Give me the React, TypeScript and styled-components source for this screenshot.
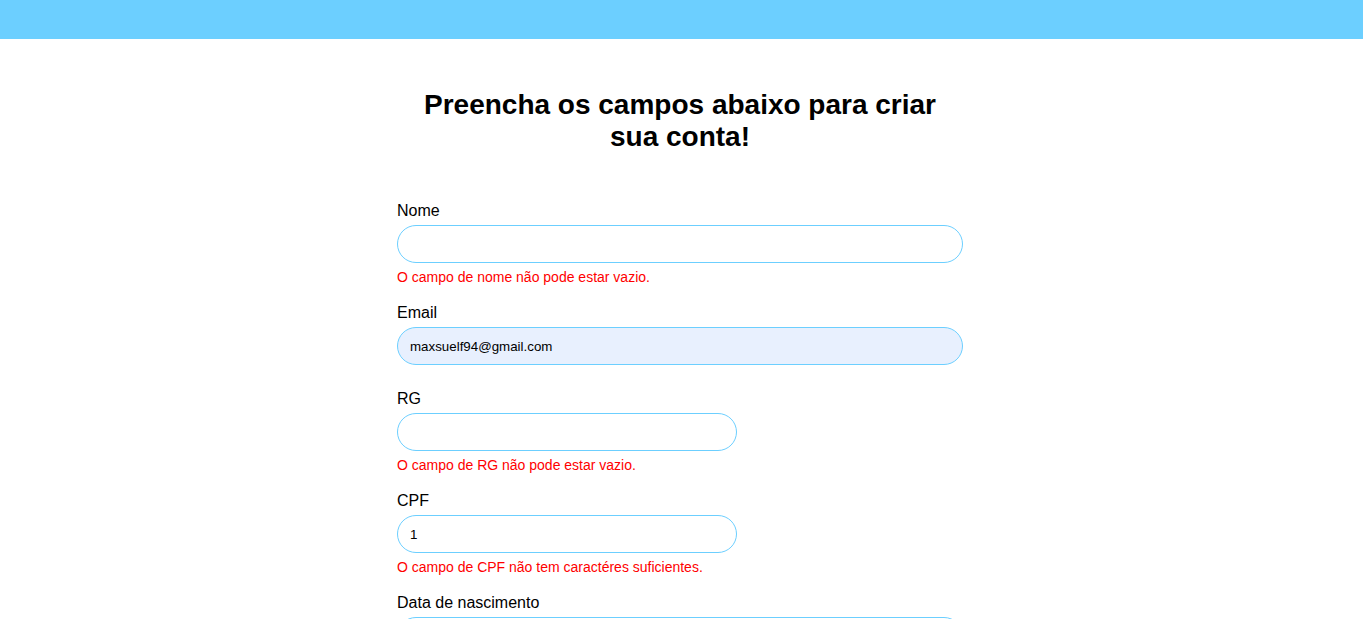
import React from "react";
import styled, { createGlobalStyle } from "styled-components";

const GlobalStyle = createGlobalStyle`
  html, body {
    margin: 0;
    padding: 0;
    background: #ffffff;
    font-family: "Liberation Sans", Arial, sans-serif;
    color: #000000;
  }
  html::-webkit-scrollbar, body::-webkit-scrollbar {
    display: none;
  }
  html {
    scrollbar-width: none;
  }
  * {
    box-sizing: border-box;
  }
`;

const Header = styled.header`
  height: 39px;
  background: #6ccfff;
`;

const Main = styled.main`
  display: flex;
  justify-content: center;
  padding: 50px 3px 40px 0;
`;

const Column = styled.div`
  width: 566px;
  display: flex;
  flex-direction: column;
`;

const Title = styled.h1`
  margin: 0 0 49px;
  font-size: 28px;
  font-weight: 700;
  line-height: normal;
  text-align: center;
`;

const Form = styled.form`
  display: flex;
  flex-direction: column;
`;

const Field = styled.div`
  display: flex;
  flex-direction: column;
  margin-bottom: 19.1px;
`;

const Label = styled.label`
  font-size: 16px;
  line-height: normal;
  margin-bottom: 5px;
`;

const Input = styled.input<{ $size: "full" | "half"; $autofill?: boolean }>`
  width: ${(p) => (p.$size === "full" ? "566px" : "340px")};
  height: 38px;
  padding: 0 12px;
  border: 1px solid #6ccfff;
  border-radius: 19px;
  background: ${(p) => (p.$autofill ? "#e8f0fe" : "#ffffff")};
  font-family: "Liberation Sans", Arial, sans-serif;
  font-size: 13.333px;
  color: #000000;
  outline: none;
`;

const ErrorText = styled.span`
  margin-top: 6px;
  font-size: 14px;
  line-height: normal;
  color: #ff0000;
  &:empty {
    line-height: 0;
  }
`;

type FieldDef = {
  id: string;
  label: string;
  size: "full" | "half";
  value?: string;
  error?: string;
  autofill?: boolean;
  type?: string;
};

const fields: FieldDef[] = [
  { id: "nome", label: "Nome", size: "full", error: "O campo de nome não pode estar vazio." },
  { id: "email", label: "Email", size: "full", value: "maxsuelf94@gmail.com", autofill: true },
  { id: "rg", label: "RG", size: "half", error: "O campo de RG não pode estar vazio." },
  { id: "cpf", label: "CPF", size: "half", value: "1", error: "O campo de CPF não tem caractéres suficientes." },
  { id: "nascimento", label: "Data de nascimento", size: "full" },
  { id: "senha", label: "Senha", size: "full", type: "password" },
];

export default function App() {
  return (
    <>
      <GlobalStyle />
      <Header />
      <Main>
        <Column>
          <Title>
            Preencha os campos abaixo para criar
            <br />
            sua conta!
          </Title>
          <Form onSubmit={(e) => e.preventDefault()}>
            {fields.map((f) => (
              <Field key={f.id}>
                <Label htmlFor={f.id}>{f.label}</Label>
                <Input
                  id={f.id}
                  type={f.type ?? "text"}
                  $size={f.size}
                  $autofill={f.autofill}
                  defaultValue={f.value ?? ""}
                />
                <ErrorText>{f.error ?? ""}</ErrorText>
              </Field>
            ))}
          </Form>
        </Column>
      </Main>
    </>
  );
}
